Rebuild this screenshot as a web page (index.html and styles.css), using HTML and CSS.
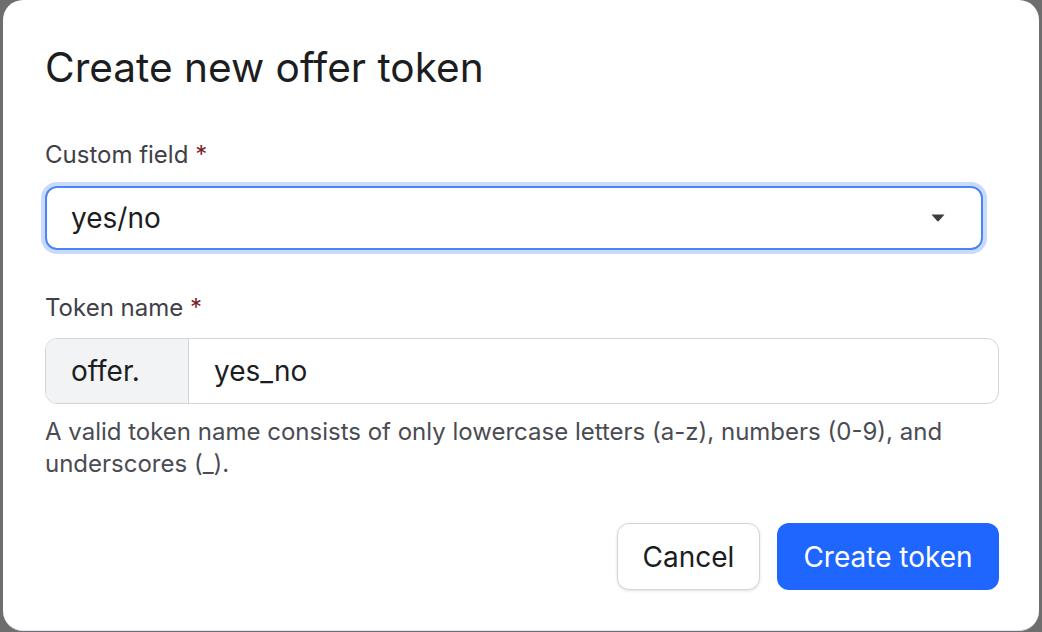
FILE: index.html
```html
<!DOCTYPE html>
<html>
<head>
<meta charset="utf-8">
<link rel="stylesheet" href="styles.css">
</head>
<body>
<div class="modal">
  <h1 class="title">Create new offer token</h1>
  <div class="label">Custom field <span class="req">*</span></div>
  <div class="select">
    <span class="select-value">yes/no</span>
    <svg class="caret" width="14" height="8" viewBox="0 0 14 8"><path d="M0.5 0.5 H13.5 L7.8 7 Q7 7.8 6.2 7 Z" fill="#3c3d42"/></svg>
  </div>
  <div class="label label-2">Token name <span class="req">*</span></div>
  <div class="group">
    <div class="prefix">offer.</div>
    <div class="input">yes_no</div>
  </div>
  <p class="help">A valid token name consists of only lowercase letters (a-z), numbers (0-9), and underscores (_).</p>
  <div class="actions">
    <button class="btn btn-cancel">Cancel</button>
    <button class="btn btn-primary">Create token</button>
  </div>
</div>
</body>
</html>
```
FILE: styles.css
```css
html, body {
  margin: 0;
  padding: 0;
  background: #6e6e6e;
  width: 1042px;
  height: 632px;
  overflow: hidden;
}
body {
  font-family: Inter, "Noto Sans", sans-serif;
  color: #1c1d21;
}
.modal {
  margin-left: 3px;
  width: 1036px;
  height: 631px;
  box-sizing: border-box;
  background: #fff;
  border-radius: 20px;
  padding: 44px 40px 0 42px;
  display: flex;
  flex-direction: column;
  border-bottom: 1px solid #e4e5e8;
}
.title {
  margin: 0;
  font-size: 40.6px;
  line-height: 48px;
  font-weight: 400;
  color: #1c1d21;
}
.label {
  margin-top: 47px;
  font-size: 24px;
  line-height: 32px;
  color: #3f4147;
}
.label-2 {
  margin-top: 42px;
}
.req {
  color: #7b1c2a;
}
.select {
  margin-top: 15px;
  margin-right: 16px;
  height: 64px;
  box-sizing: border-box;
  border: 2px solid #4a84f5;
  border-radius: 12px;
  box-shadow: 0 0 0 4px #c9dafc;
  display: flex;
  align-items: center;
  justify-content: space-between;
  padding: 0 36px 0 24px;
  font-size: 28px;
}
.caret {
  display: block;
}
.group {
  margin-top: 14px;
  height: 66px;
  box-sizing: border-box;
  border: 1px solid #d3d5da;
  border-radius: 12px;
  display: flex;
  overflow: hidden;
  font-size: 28px;
}
.prefix {
  width: 143px;
  box-sizing: border-box;
  background: #f2f3f5;
  border-right: 1px solid #d3d5da;
  display: flex;
  align-items: center;
  padding-left: 25px;
}
.input {
  display: flex;
  align-items: center;
  padding-left: 25px;
}
.help {
  margin: 12px 0 0;
  font-size: 24px;
  line-height: 32px;
  color: #4a4c53;
  padding-right: 10px;
}
.actions {
  margin-top: 43px;
  display: flex;
  justify-content: flex-end;
  gap: 17px;
}
.btn {
  font-family: Inter, "Noto Sans", sans-serif;
  font-size: 28px;
  height: 67px;
  border-radius: 12px;
  padding: 0;
  cursor: pointer;
}
.btn-cancel {
  width: 143px;
  background: #fff;
  color: #1c1d21;
  border: 1px solid #d3d5da;
  box-shadow: 0 1px 3px rgba(0,0,0,0.12);
}
.btn-primary {
  width: 222px;
  background: #1f66ff;
  color: #fff;
  border: none;
}
```
